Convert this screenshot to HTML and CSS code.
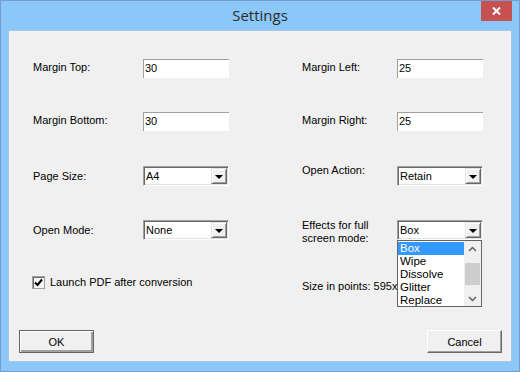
FILE: index.html
```html
<!DOCTYPE html>
<html lang="en">
<head>
  <meta charset="UTF-8">
  <title>Settings</title>
  <link rel="stylesheet" href="styles.css">
</head>
<body>
  <div class="window">
    <div class="titlebar">
      <span></span>
      <span class="title">Settings</span>
      <button class="close" type="button">
        <svg width="9" height="8" viewBox="0 0 9 8"><path d="M1 0.5 L8 7.5 M8 0.5 L1 7.5" stroke="#fff" stroke-width="2"/></svg>
      </button>
    </div>

    <div class="client">
      <div class="form">
        <label class="lbl">Margin Top:</label>
        <div class="edit">30</div>
        <span></span>
        <label class="lbl">Margin Left:</label>
        <div class="edit">25</div>

        <label class="lbl">Margin Bottom:</label>
        <div class="edit">30</div>
        <span></span>
        <label class="lbl">Margin Right:</label>
        <div class="edit">25</div>

        <label class="lbl mid">Page Size:</label>
        <div class="combo"><span>A4</span><span class="combo-btn"><i></i></span></div>
        <span></span>
        <label class="lbl top">Open Action:</label>
        <div class="combo"><span>Retain</span><span class="combo-btn"><i></i></span></div>

        <label class="lbl mid">Open Mode:</label>
        <div class="combo"><span>None</span><span class="combo-btn"><i></i></span></div>
        <span></span>
        <label class="lbl top two">Effects for full<br>screen mode:</label>
        <div class="combo open">
          <span>Box</span><span class="combo-btn"><i></i></span>
          <div class="droplist">
            <ul>
              <li class="sel">Box</li>
              <li>Wipe</li>
              <li>Dissolve</li>
              <li>Glitter</li>
              <li>Replace</li>
            </ul>
            <div class="scroll">
              <svg width="9" height="6" viewBox="0 0 9 6"><path d="M1 5 L4.5 1.5 L8 5" fill="none" stroke="#606060" stroke-width="1.5"/></svg>
              <div class="thumb"></div>
              <svg width="9" height="6" viewBox="0 0 9 6"><path d="M1 1 L4.5 4.5 L8 1" fill="none" stroke="#606060" stroke-width="1.5"/></svg>
            </div>
          </div>
        </div>

        <label class="check">
          <span class="box">
            <svg width="9" height="9" viewBox="0 0 9 9"><path d="M1 4.5 L3.5 7 L8 1.5" fill="none" stroke="#000" stroke-width="2"/></svg>
          </span>
          Launch PDF after conversion
        </label>
        <!-- the open list covers the end of this text -->
        <span class="size">Size in points: 595x842</span>
      </div>

      <div class="footer">
        <button class="btn default" type="button">OK</button>
        <button class="btn" type="button">Cancel</button>
      </div>
    </div>
  </div>
</body>
</html>
```

FILE: styles.css
```css
body {
  margin: 0;
  background: #fff;
}
.window {
  width: 520px;
  height: 372px;
  box-sizing: border-box;
  border: 1px solid #6f9fd1;
  background: #8bc7f8;
  display: flex;
  flex-direction: column;
}
.titlebar {
  height: 29px;
  display: grid;
  grid-template-columns: 1fr auto 1fr;
  align-items: start;
}
.title {
  font-family: "Open Sans", "Noto Sans", sans-serif;
  font-size: 15px;
  color: #2b2b2b;
  line-height: 28px;
}
.close {
  justify-self: end;
  width: 31px;
  height: 20px;
  margin-right: 7px;
  border: none;
  padding: 0;
  background: #c75050;
  display: flex;
  align-items: center;
  justify-content: center;
}
.client {
  flex: 1;
  margin: 0 7px 9px;
  background: #f0f0f0;
  border: 1px solid #a7c6e6;
  display: flex;
  flex-direction: column;
  font-family: "Liberation Sans", Arial, sans-serif;
  font-size: 11px;
  color: #000;
}
.form {
  display: grid;
  grid-template-columns: 110px 86px 73px 95px 86px;
  grid-template-rows: 19px 20px 20px 20px 16px;
  row-gap: 34px;
  padding: 28px 0 0 24px;
}
.lbl {
  align-self: center;
  line-height: 13px;
  margin-top: -3px;
}
.lbl.mid {
  margin-top: 0;
}
.lbl.top {
  align-self: start;
  margin-top: -2px;
}
.lbl.two {
  margin-top: -1px;
}
.edit {
  background: #fff;
  border-top: 1px solid #a0a0a0;
  border-left: 1px solid #a0a0a0;
  padding: 2px 0 0 1px;
  line-height: 13px;
  height: 19px;
  box-sizing: border-box;
}
.combo {
  position: relative;
  height: 20px;
  box-sizing: border-box;
  background: #fff;
  border-top: 1px solid #a0a0a0;
  border-left: 1px solid #a0a0a0;
  border-right: 1px solid #fff;
  border-bottom: 1px solid #fff;
  box-shadow: inset 1px 1px 0 #696969, inset -1px -1px 0 #e3e3e3;
  display: flex;
  align-items: center;
  justify-content: space-between;
  padding: 1px 1px 1px 2px;
  line-height: 13px;
}
.combo-btn {
  width: 16px;
  height: 16px;
  box-sizing: border-box;
  background: #f0f0f0;
  border-top: 1px solid #e3e3e3;
  border-left: 1px solid #e3e3e3;
  border-right: 1px solid #696969;
  border-bottom: 1px solid #696969;
  box-shadow: inset 1px 1px 0 #fff, inset -1px -1px 0 #a0a0a0;
  display: flex;
  align-items: center;
  justify-content: center;
}
.combo-btn i {
  width: 0;
  height: 0;
  border-left: 4px solid transparent;
  border-right: 4px solid transparent;
  border-top: 4px solid #000;
  margin-top: 1px;
}
.droplist {
  position: absolute;
  top: 19px;
  left: -1px;
  width: 85px;
  height: 67px;
  box-sizing: border-box;
  border: 1px solid #646464;
  background: #fff;
  display: flex;
  z-index: 2;
}
.droplist ul {
  flex: 1;
  list-style: none;
  margin: 1px 0 0;
  padding: 0;
}
.droplist li {
  height: 13px;
  line-height: 13px;
  padding-left: 2px;
  font-size: 11.5px;
}
.droplist li.sel {
  background: #3399ff;
  color: #fff;
}
.scroll {
  width: 17px;
  background: #f0f0f0;
  display: flex;
  flex-direction: column;
  align-items: center;
  justify-content: space-between;
  padding: 5px 0 4px;
  box-sizing: border-box;
}
.thumb {
  width: 15px;
  height: 22px;
  background: #cdcdcd;
}
.check {
  grid-column: 1 / 4;
  display: flex;
  align-items: center;
  gap: 5px;
  margin-left: -1px;
  line-height: 13px;
}
.box {
  width: 13px;
  height: 13px;
  box-sizing: border-box;
  border: 1px solid #a0a0a0;
  box-shadow: inset 1px 1px 0 #696969;
  background: #f4f4f4;
  display: flex;
  align-items: center;
  justify-content: center;
}
.size {
  grid-column: 4 / 6;
  align-self: end;
  line-height: 13px;
  margin-bottom: -3px;
  white-space: nowrap;
}
.footer {
  margin-top: auto;
  display: flex;
  justify-content: space-between;
  padding: 0 9px 8px 10px;
}
.btn {
  width: 75px;
  height: 23px;
  box-sizing: border-box;
  font-family: "Liberation Sans", Arial, sans-serif;
  font-size: 11px;
  color: #000;
  background: #f0f0f0;
  border-top: 1px solid #fff;
  border-left: 1px solid #fff;
  border-right: 1px solid #696969;
  border-bottom: 1px solid #696969;
  box-shadow: inset -1px -1px 0 #a0a0a0;
  padding: 0;
}
.btn.default {
  border: 1px solid #646464;
  box-shadow: inset 1px 1px 0 #fff, inset -2px -2px 0 #a0a0a0;
}
```
